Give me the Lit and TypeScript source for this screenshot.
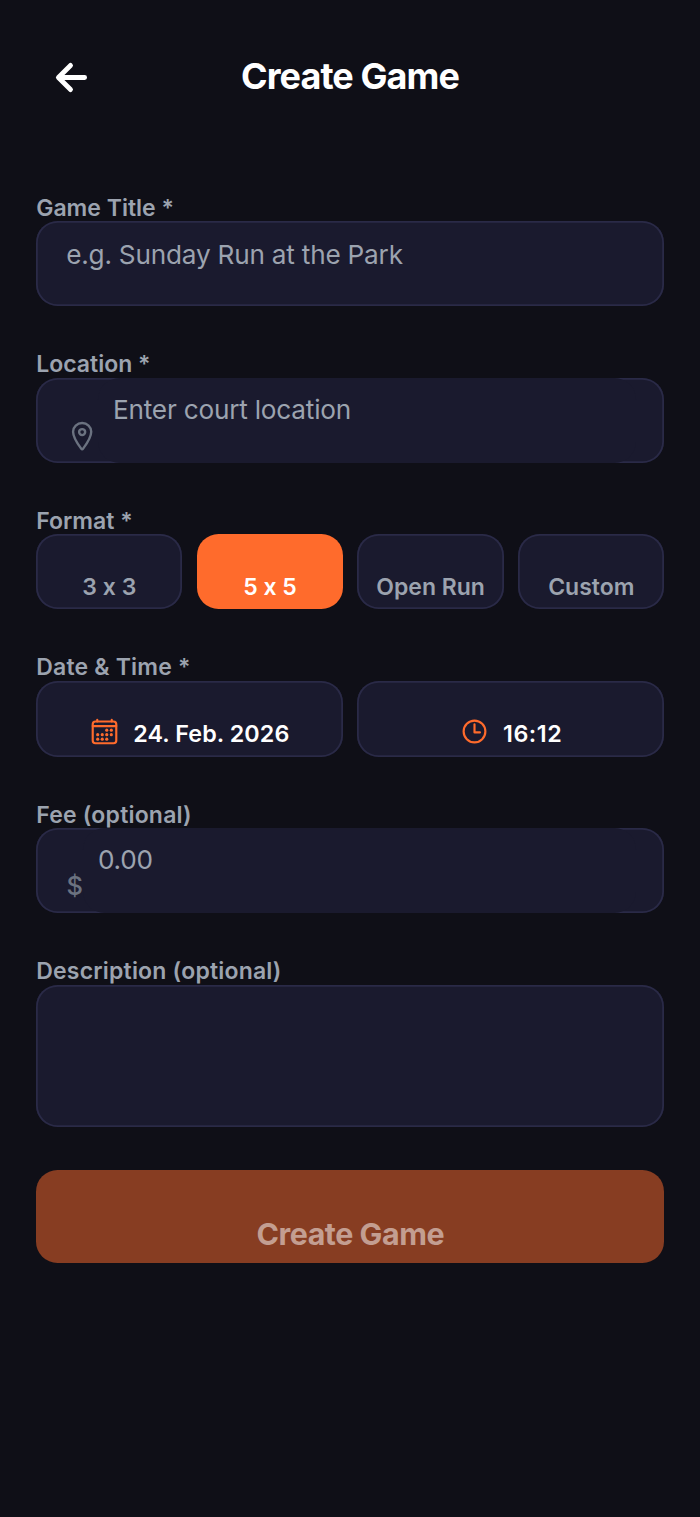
import { LitElement, html, css, svg } from "lit";
import { customElement, state } from "lit/decorators.js";

const FORMATS = ["3 x 3", "5 x 5", "Open Run", "Custom"];

const CALENDAR_DOTS = [
  [296, 232], [376, 232],
  [136, 312], [216, 312], [296, 312], [376, 312],
  [136, 392], [216, 392], [296, 392],
];

@customElement("app-root")
export class AppRoot extends LitElement {
  @state() private format = "5 x 5";

  static styles = css`
    :host {
      display: block;
      min-height: 1517px;
      box-sizing: border-box;
      background: #0f0f17;
      color: #fff;
      font-family: Inter, "Liberation Sans", sans-serif;
      font-feature-settings: "calt" 0;
    }
    * { box-sizing: border-box; }
    svg { display: block; flex: none; fill: none; stroke: currentColor; stroke-linecap: round; stroke-linejoin: round; stroke-width: 38; }
    .header {
      display: grid;
      grid-template-columns: 43px 1fr 43px;
      align-items: center;
      height: 154px;
      padding: 0 50px;
    }
    .back { width: 43px; height: 43px; stroke-width: 58; }
    .title { padding-bottom: 2px; text-align: center; font-size: 36px; line-height: 44px; font-weight: 700; letter-spacing: -0.93px; white-space: nowrap; }
    .form {
      display: flex;
      flex-direction: column;
      gap: 43.5px;
      padding: 39.3px 35.6px 0 36.2px;
    }
    .label { height: 28px; line-height: 31px; font-size: 23px; font-weight: 600; color: #9ca3af; white-space: nowrap; }
    .raised { line-height: 29.6px; }
    .wide { letter-spacing: 0.2px; }
    .box {
      background: #1a1a2e;
      border-radius: 21.5px;
      box-shadow: inset 0 0 0 1.8px #2a2a47;
      color: #9ca3af;
    }
    .field { display: flex; height: 85.1px; padding-right: 28.7px; font-size: 26.2px; line-height: 34px; letter-spacing: -0.22px; white-space: nowrap; }
    .plain { padding: 16.5px 0 0 30px; }
    .inner { flex: 1; background: #1a1a2e; border-radius: 21.5px; padding-left: 14.5px; }
    .location { padding-left: 30px; }
    .pin { width: 32.3px; height: 32.3px; margin-top: 42.4px; color: #6b7280; }
    .location .inner { padding-top: 15.3px; }
    .fee { padding-left: 30.2px; }
    .fee .inner { padding-top: 15px; }
    .dollar { width: 17px; padding-top: 41px; color: #6b7280; font-size: 25.5px; font-weight: 500; }
    .row { display: grid; gap: 14.4px; white-space: nowrap; font-weight: 600; }
    .formats { grid-template-columns: repeat(4, 1fr); }
    .chip { height: 74.6px; padding-top: 39px; text-align: center; font-size: 23px; line-height: 28px; }
    .active { background: #ff6b2c; box-shadow: none; color: #fff; }
    .times { grid-template-columns: 1fr 1fr; }
    .when { display: flex; justify-content: center; height: 76.1px; padding-top: 37.3px; color: #fff; font-size: 23.3px; line-height: 32px; letter-spacing: 0.08px; gap: 14.4px; }
    .clock { letter-spacing: 0.5px; }
    .when svg { width: 29px; height: 29px; margin-top: -0.8px; color: #ff6b2c; }
    .description { height: 142px; }
    .submit {
      height: 92.4px;
      padding-top: 44.5px;
      border-radius: 21.5px;
      background: #873d22;
      color: #c39e91;
      text-align: center;
      font-size: 30.4px;
      line-height: 38px;
      font-weight: 700;
      letter-spacing: -0.45px;
    }
  `;

  render() {
    return html`
      <header class="header">
        <svg class="back" viewBox="0 0 512 512"><path d="M244 400 100 256l144-144M120 256h292" /></svg>
        <div class="title">Create Game</div>
      </header>
      <main class="form">
        <section>
          <div class="label">Game Title *</div>
          <div class="box field plain">e.g. Sunday Run at the Park</div>
        </section>
        <section>
          <div class="label raised">Location *</div>
          <div class="box field location">
            <svg class="pin" viewBox="0 0 512 512">
              <path d="M256 48c-79.5 0-144 61.39-144 137 0 87 96 224.87 131.25 272.49a15.77 15.77 0 0025.5 0C304 409.89 400 272.07 400 185c0-75.61-64.5-137-144-137z" />
              <circle cx="256" cy="192" r="48" />
            </svg>
            <div class="inner">Enter court location</div>
          </div>
        </section>
        <section>
          <div class="label">Format *</div>
          <div class="row formats">
            ${FORMATS.map((f) => html`
              <div class="box chip ${f === this.format ? "active" : ""}" @click=${() => (this.format = f)}>${f}</div>
            `)}
          </div>
        </section>
        <section>
          <div class="label raised wide">Date &amp; Time *</div>
          <div class="row times">
            <div class="box when">
              <svg viewBox="0 0 512 512">
                <rect x="48" y="80" width="416" height="384" rx="48" />
                <path d="M128 48v32M384 48v32M464 160H48" />
                ${CALENDAR_DOTS.map(([x, y]) => svg`<circle cx=${x} cy=${y} r="28" fill="currentColor" stroke="none" />`)}
              </svg>
              <span>24. Feb. 2026</span>
            </div>
            <div class="box when clock">
              <svg viewBox="0 0 512 512">
                <circle cx="256" cy="256" r="192" />
                <path d="M256 128v144h96" />
              </svg>
              <span>16:12</span>
            </div>
          </div>
        </section>
        <section>
          <div class="label wide">Fee (optional)</div>
          <div class="box field fee">
            <span class="dollar">$</span>
            <div class="inner">0.00</div>
          </div>
        </section>
        <section>
          <div class="label raised wide">Description (optional)</div>
          <div class="box description"></div>
        </section>
        <div class="submit">Create Game</div>
      </main>
    `;
  }
}
